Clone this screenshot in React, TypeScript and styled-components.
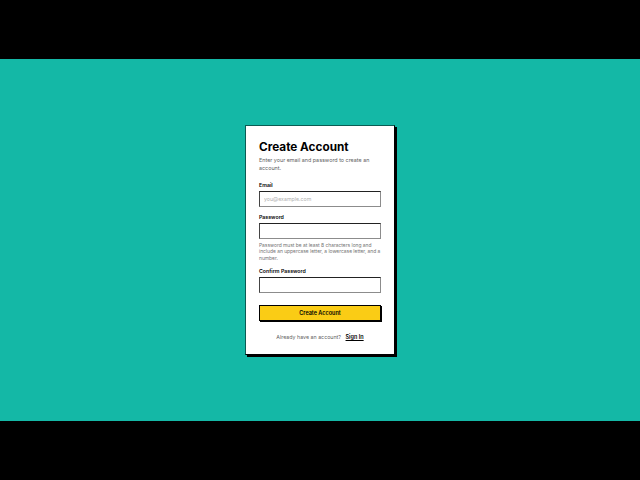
import React from "react";
import styled, { createGlobalStyle } from "styled-components";

const GlobalStyle = createGlobalStyle`
  html, body {
    margin: 0;
    padding: 0;
    background: #000;
    font-family: Inter, "Liberation Sans", sans-serif;
  }
`;

const Page = styled.div`
  width: 640px;
  height: 480px;
  display: flex;
  align-items: center;
  background: #000;
`;

const Stage = styled.main`
  width: 100%;
  height: 362px;
  display: flex;
  align-items: center;
  justify-content: center;
  background: #14b8a6;
`;

const Card = styled.form`
  box-sizing: border-box;
  width: 150px;
  height: 230px;
  padding: 14px 13px 0;
  background: #fff;
  border: 1px solid #000;
  border-top-color: #0a5c53;
  border-left-color: #0a5c53;
  box-shadow: 2px 2px 0 #000;
`;

const Title = styled.h1`
  margin: 0 0 2px;
  font-size: 11.75px;
  line-height: 14px;
  font-weight: 700;
  color: #000;
`;

const Subtitle = styled.p`
  margin: 0 0 10px;
  font-size: 5.4px;
  line-height: 8px;
  color: #5f5f5f;
`;

const Field = styled.div`
  margin-bottom: 7px;
`;

const Label = styled.label`
  display: block;
  margin-bottom: 2px;
  font-size: 5.25px;
  line-height: 7px;
  font-weight: 600;
  color: #000;
`;

const Input = styled.input`
  display: block;
  box-sizing: border-box;
  width: 100%;
  height: 16px;
  padding: 0 4px;
  border: 1px solid;
  border-color: #222 #8c8c8c #8c8c8c #444;
  border-radius: 0;
  outline: none;
  background: #fff;
  font-family: inherit;
  font-size: 5.25px;

  &::placeholder {
    color: #b0b0b0;
  }
`;

const Hint = styled.p`
  margin: 3px 0 0;
  font-size: 4.9px;
  line-height: 6.3px;
  color: #737373;
`;

const Submit = styled.button`
  display: block;
  box-sizing: border-box;
  width: 100%;
  height: 16px;
  margin-top: 12px;
  padding: 0;
  border: 1px solid #000;
  border-radius: 0;
  background: #facc15;
  box-shadow: 1px 1px 0 #000;
  font-family: inherit;
  font-size: 5.5px;
  font-weight: 600;
  color: #000;
`;

const Footer = styled.p`
  margin: 12px 0 0;
  text-align: center;
  font-size: 5.3px;
  line-height: 8px;
  color: #5f5f5f;
`;

const SignIn = styled.a`
  margin-left: 3px;
  font-size: 5.5px;
  font-weight: 600;
  color: #000;
  text-decoration: underline;
`;

export default function App() {
  return (
    <Page>
      <GlobalStyle />
      <Stage>
        <Card>
          <Title>Create Account</Title>
          <Subtitle>Enter your email and password to create an account.</Subtitle>
          <Field>
            <Label>Email</Label>
            <Input type="email" placeholder="you@example.com" />
          </Field>
          <Field>
            <Label>Password</Label>
            <Input type="password" />
            <Hint>
              Password must be at least 8 characters long and include an uppercase letter, a
              lowercase letter, and a number.
            </Hint>
          </Field>
          <Field>
            <Label>Confirm Password</Label>
            <Input type="password" />
          </Field>
          <Submit type="button">Create Account</Submit>
          <Footer>
            Already have an account? <SignIn href="#">Sign In</SignIn>
          </Footer>
        </Card>
      </Stage>
    </Page>
  );
}
